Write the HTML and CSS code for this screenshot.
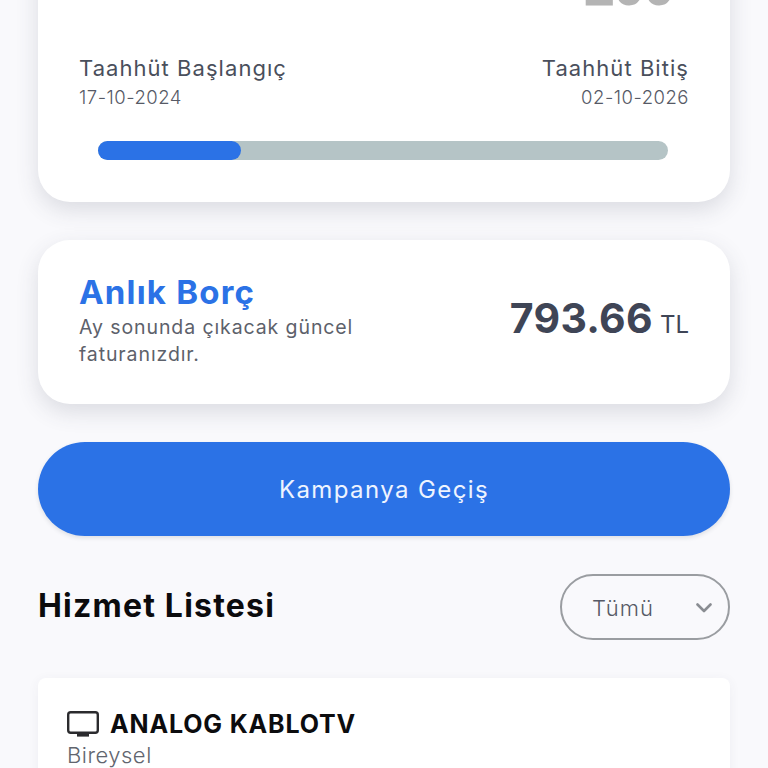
FILE: index.html
```html
<!DOCTYPE html>
<html lang="tr">
<head>
<meta charset="utf-8">
<title>Hizmet Listesi</title>
<link rel="stylesheet" href="styles.css">
</head>
<body>
<main class="page">
  <section class="card commit">
    <div class="speed-row"><span class="speed">200</span></div>
    <div class="dates">
      <div>
        <div class="date-label">Taahhüt Başlangıç</div>
        <div class="date-value">17-10-2024</div>
      </div>
      <div class="end">
        <div class="date-label">Taahhüt Bitiş</div>
        <div class="date-value">02-10-2026</div>
      </div>
    </div>
    <div class="track"><div class="fill"></div></div>
  </section>

  <section class="card debt">
    <div class="debt-text">
      <h2 class="debt-title">Anlık Borç</h2>
      <p class="debt-note">Ay sonunda çıkacak güncel faturanızdır.</p>
    </div>
    <div class="amount"><span class="amount-num">793.66</span> <span class="amount-cur">TL</span></div>
  </section>

  <button class="cta">Kampanya Geçiş</button>

  <div class="list-head">
    <h2 class="list-title">Hizmet Listesi</h2>
    <div class="select">
      <span>Tümü</span>
      <svg class="chev" viewBox="0 0 16 10" width="16" height="10"><path d="M1.5 1.5 8 8l6.5-6.5" fill="none" stroke="#8a8d92" stroke-width="2.6" stroke-linecap="round" stroke-linejoin="round"/></svg>
    </div>
  </div>

  <section class="service">
    <div class="service-head">
      <svg class="tv" viewBox="0 0 32 26" width="32" height="26"><rect x="1.2" y="1.2" width="29.6" height="20.6" rx="2.5" fill="none" stroke="#2b2b2e" stroke-width="2.4"/><rect x="10" y="22" width="12" height="3.6" fill="#2b2b2e"/></svg>
      <span class="service-name">ANALOG KABLOTV</span>
    </div>
    <div class="service-type">Bireysel</div>
  </section>
</main>
</body>
</html>
```
FILE: styles.css
```css
* { box-sizing: border-box; }
html, body { margin: 0; height: 768px; overflow: hidden; background: #f9f9fc; }
.page { padding: 0 38px; font-family: "Inter", "Open Sans", sans-serif; }
.card { background: #fff; box-shadow: 0 8px 22px rgba(60, 70, 85, .16); }
.commit { height: 242px; margin-top: -40px; padding: 0 41px; border-radius: 0 0 32px 32px; }
.speed-row { height: 47px; display: flex; justify-content: flex-end; align-items: flex-start; overflow: hidden; padding-right: 14px; }
.speed { font-family: "Liberation Sans", sans-serif; font-weight: 700; font-size: 50px; line-height: 55px; color: #b4b4b4; letter-spacing: 2px; -webkit-text-stroke: 3px #b4b4b4; }
.dates { display: flex; justify-content: space-between; margin-top: 47px; }
.end { text-align: right; }
.date-label { font-size: 22px; line-height: 28px; color: #4a4f5c; letter-spacing: 1.05px; font-weight: 400; }
.date-value { font-size: 18.5px; line-height: 24px; margin-top: 3px; color: #565a66; font-weight: 300; letter-spacing: .5px; }
.track { height: 19px; margin: 32px 21px 0 19px; border-radius: 10px; background: #b5c4c6; }
.fill { width: 25%; height: 100%; border-radius: 10px; background: #2b72e6; }
.debt { margin-top: 38px; height: 164px; border-radius: 32px; padding: 0 41px; display: flex; align-items: center; justify-content: space-between; }
.debt-text { width: 300px; margin-bottom: 4px; }
.debt-title { margin: 0; font-size: 33px; line-height: 40px; font-weight: 700; color: #2b72e6; letter-spacing: 1.2px; }
.debt-note { margin: 2px 0 0; font-size: 19.5px; line-height: 27px; color: #5d616b; font-weight: 400; letter-spacing: .9px; }
.amount { display: flex; align-items: baseline; gap: 7px; color: #3f4556; margin-bottom: 8px; }
.amount-num { font-size: 41px; font-weight: 700; letter-spacing: .3px; }
.amount-cur { font-size: 24px; font-weight: 400; }
.cta { display: block; width: 100%; height: 94px; margin-top: 38px; border: 0; border-radius: 47px; background: #2b72e6; color: #eef4ff; font: 400 24px "Inter", sans-serif; letter-spacing: 1.4px; box-shadow: 0 2px 4px rgba(60, 70, 85, .14); }
.list-head { display: flex; justify-content: space-between; align-items: center; margin-top: 38px; height: 66px; }
.list-title { margin: 0 0 4px; font-size: 32px; font-weight: 700; color: #0b0b0d; letter-spacing: 1.2px; }
.select { width: 170px; height: 66px; border: 2px solid #9a9da1; border-radius: 33px; display: flex; align-items: center; justify-content: space-between; padding: 2px 16px 0 30px; font-size: 22px; font-weight: 300; color: #565a66; letter-spacing: 1px; }
.service { margin-top: 38px; height: 120px; padding: 31px 29px; background: #fff; border-radius: 8px; box-shadow: 0 2px 12px rgba(60, 70, 85, .06); }
.service-head { display: flex; align-items: center; gap: 11px; }
.service-name { font-size: 25px; font-weight: 700; color: #0c0c0e; line-height: 30px; letter-spacing: .85px; }
.service-type { margin-top: 2px; font-size: 22px; line-height: 28px; color: #61656e; font-weight: 300; letter-spacing: .5px; }
```
